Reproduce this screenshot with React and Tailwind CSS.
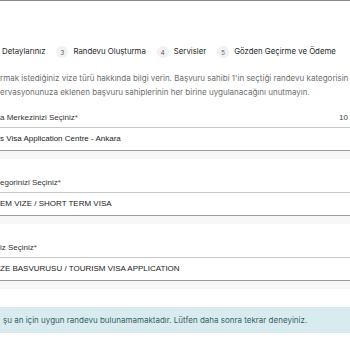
export default function App() {
  const steps = [
    { n: 3, label: 'Randevu Oluşturma' },
    { n: 4, label: 'Servisler' },
    { n: 5, label: 'Gözden Geçirme ve Ödeme' },
  ]

  const fields = [
    { label: 'a Merkezinizi Seçiniz', value: 's Visa Application Centre - Ankara', extra: '10' },
    { label: 'egorinizi Seçiniz', value: 'EM VIZE / SHORT TERM VISA' },
    { label: 'iz Seçiniz', value: 'ZE BASVURUSU / TOURISM VISA APPLICATION' },
  ]

  return (
    <div className="w-[350px] h-[350px] overflow-hidden bg-white border-t border-[#8a8a8a]">
      <div className="flex items-center h-[14px] mt-[44px] text-[7.8px] text-[#1f1f1f] whitespace-nowrap" style={{ fontFamily: 'Inter, sans-serif' }}>
        <span className="ml-[2px]">Detaylarınız</span>
        {steps.map((s) => (
          <div key={s.n} className="flex items-center ml-[11px]">
            <span className="flex items-center justify-center w-[12px] h-[12px] rounded-full bg-[#f1f1f1] text-[6px] text-[#555]">{s.n}</span>
            <span className="ml-[5px]">{s.label}</span>
          </div>
        ))}
      </div>

      <div className="mt-[12px] text-[8px] leading-[14px] text-[#6e6e6e] whitespace-nowrap" style={{ fontFamily: 'Inter, sans-serif' }}>
        <p>rmak istediğiniz vize türü hakkında bilgi verin. Başvuru sahibi 1'in seçtiği randevu kategorisin</p>
        <p>ervasyonunuza eklenen başvuru sahiplerinin her birine uygulanacağını unutmayın.</p>
      </div>

      <div className="mt-[12px] flex flex-col gap-[17px]" style={{ fontFamily: '"Liberation Sans", Arial, sans-serif' }}>
        {fields.map((f) => (
          <div key={f.label}>
            <div className="flex items-center justify-between h-[14px] text-[8px] text-[#333] whitespace-nowrap">
              <span>
                {f.label}<span className="text-[#a3263a]">*</span>
              </span>
              {f.extra && <span className="mr-[2px] text-[#444]">{f.extra}</span>}
            </div>
            <div className="mt-[2px] h-[24px] flex items-center bg-white border-t border-[#c8c8c8] border-b border-b-[#9a9a9a] text-[8px] text-[#222] whitespace-nowrap">
              {f.value}
            </div>
            <div className="h-[8px] bg-[#f7f7f7]" />
          </div>
        ))}
      </div>

      <div className="mt-[18px] h-[26px] flex items-center bg-[#d8ebef] text-[8px] text-[#3e5b66] whitespace-nowrap" style={{ fontFamily: 'Inter, sans-serif' }}>
        <span className="ml-[3px]">şu an için uygun randevu bulunamamaktadır. Lütfen daha sonra tekrar deneyiniz.</span>
      </div>
    </div>
  )
}
